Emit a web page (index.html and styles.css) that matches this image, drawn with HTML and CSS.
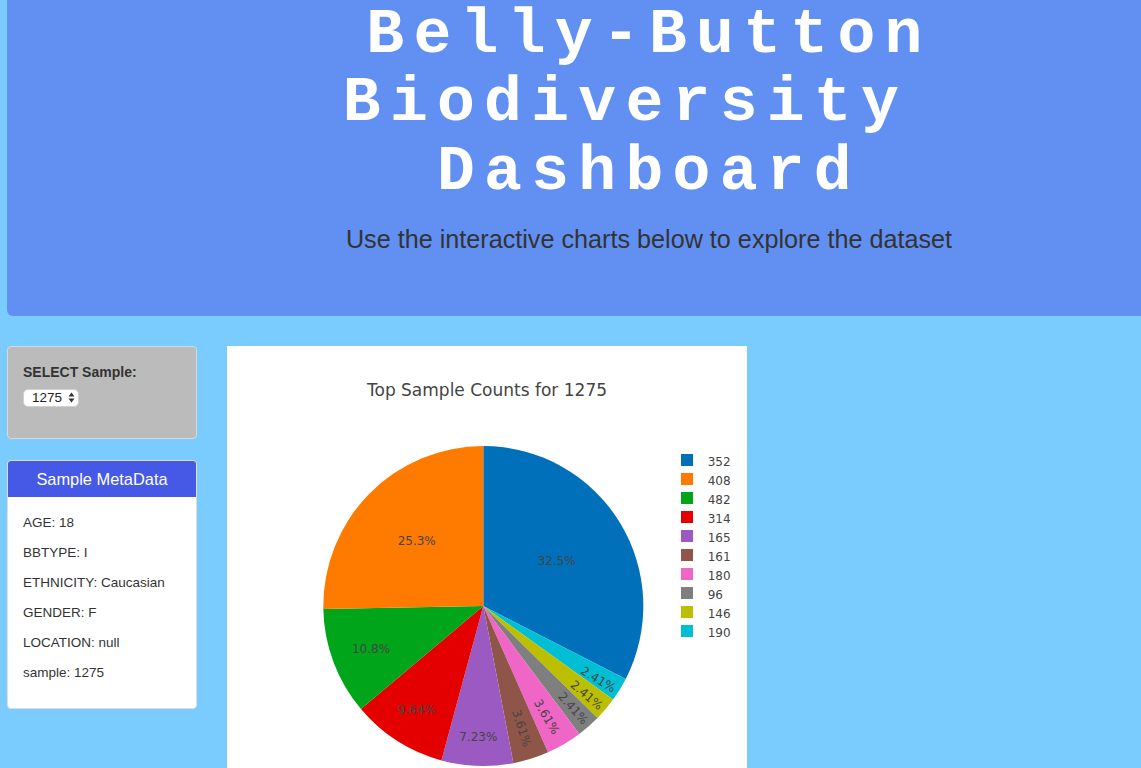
FILE: index.html
```
<!DOCTYPE html>
<html lang="en">
<head>
<meta charset="utf-8">
<title>Belly-Button Biodiversity Dashboard</title>
<link rel="stylesheet" href="styles.css">
</head>
<body>
<div class="page">
  <header class="hero">
    <h1 class="hero-title">Belly-Button<br>Biodiversity&nbsp;<br>Dashboard</h1>
    <p class="hero-sub">Use the interactive charts below to explore the dataset</p>
  </header>

  <main class="main">
    <aside class="sidebar">
      <div class="well">
        <label class="well-label" for="selDataset">SELECT Sample:</label>
        <div class="select-wrap">
          <select id="selDataset" class="select">
            <option>1275</option>
          </select>
          <svg class="select-arrows" width="7" height="11" viewBox="0 0 7 11" aria-hidden="true">
            <path d="M3.5 0.5 L6.5 4.5 L0.5 4.5 Z" fill="#333"/>
            <path d="M3.5 10.5 L6.5 6.5 L0.5 6.5 Z" fill="#333"/>
          </svg>
        </div>
      </div>

      <div class="meta">
        <div class="meta-head">Sample MetaData</div>
        <div class="meta-body">
          <p class="meta-item">AGE: 18</p>
          <p class="meta-item">BBTYPE: I</p>
          <p class="meta-item">ETHNICITY: Caucasian</p>
          <p class="meta-item">GENDER: F</p>
          <p class="meta-item">LOCATION: null</p>
          <p class="meta-item">sample: 1275</p>
        </div>
      </div>
    </aside>

    <section class="chart">
      <svg class="chart-svg" width="520" height="422" viewBox="0 0 520 422">
        <text class="chart-title" x="260" y="50" text-anchor="middle">Top Sample Counts for 1275</text>

        <g class="pie">
          <path d="M256.3,260 L256.3,100 A160,160 0 0 1 398.73,332.91 Z" fill="#0070bb"/>
          <path d="M256.3,260 L398.73,332.91 A160,160 0 0 1 386.09,353.55 Z" fill="#00bfd4"/>
          <path d="M256.3,260 L386.09,353.55 A160,160 0 0 1 370.51,372.06 Z" fill="#bbbf00"/>
          <path d="M256.3,260 L370.51,372.06 A160,160 0 0 1 352.3,388 Z" fill="#7f7f7f"/>
          <path d="M256.3,260 L352.3,388 A160,160 0 0 1 321.0,406.32 Z" fill="#f066c6"/>
          <path d="M256.3,260 L321.0,406.32 A160,160 0 0 1 286.4,417.14 Z" fill="#8f5549"/>
          <path d="M256.3,260 L286.4,417.14 A160,160 0 0 1 214.4,414.42 Z" fill="#9b5ac2"/>
          <path d="M256.3,260 L214.4,414.42 A160,160 0 0 1 133.95,363.10 Z" fill="#e50000"/>
          <path d="M256.3,260 L133.95,363.10 A160,160 0 0 1 96.33,263.03 Z" fill="#00a51a"/>
          <path d="M256.3,260 L96.33,263.03 A160,160 0 0 1 256.3,100 Z" fill="#ff7b00"/>
        </g>

        <g class="pct">
          <text x="329.7" y="215" dy="0.35em" text-anchor="middle">32.5%</text>
          <text x="189.7" y="195" dy="0.35em" text-anchor="middle">25.3%</text>
          <text x="144" y="302.7" dy="0.35em" text-anchor="middle">10.8%</text>
          <text x="189.7" y="363.3" dy="0.35em" text-anchor="middle">9.64%</text>
          <text x="251.3" y="390.7" dy="0.35em" text-anchor="middle">7.23%</text>
          <text x="371.3" y="333.3" dy="0.35em" text-anchor="middle" transform="rotate(31.4 371.3 333.3)">2.41%</text>
          <text x="359.7" y="349" dy="0.35em" text-anchor="middle" transform="rotate(40.1 359.7 349)">2.41%</text>
          <text x="346.3" y="362.3" dy="0.35em" text-anchor="middle" transform="rotate(48.8 346.3 362.3)">2.41%</text>
          <text x="319.7" y="370.7" dy="0.35em" text-anchor="middle" transform="rotate(59.6 319.7 370.7)">3.61%</text>
          <text x="294.7" y="382.3" dy="0.35em" text-anchor="middle" transform="rotate(72.6 294.7 382.3)">3.61%</text>
        </g>

        <g class="legend">
          <rect x="454" y="108" width="12" height="12" fill="#0070bb"/>
          <text x="480.7" y="119.5">352</text>
          <rect x="454" y="127" width="12" height="12" fill="#ff7b00"/>
          <text x="480.7" y="138.5">408</text>
          <rect x="454" y="146" width="12" height="12" fill="#00a51a"/>
          <text x="480.7" y="157.5">482</text>
          <rect x="454" y="165" width="12" height="12" fill="#e50000"/>
          <text x="480.7" y="176.5">314</text>
          <rect x="454" y="184" width="12" height="12" fill="#9b5ac2"/>
          <text x="480.7" y="195.5">165</text>
          <rect x="454" y="203" width="12" height="12" fill="#8f5549"/>
          <text x="480.7" y="214.5">161</text>
          <rect x="454" y="222" width="12" height="12" fill="#f066c6"/>
          <text x="480.7" y="233.5">180</text>
          <rect x="454" y="241" width="12" height="12" fill="#7f7f7f"/>
          <text x="480.7" y="252.5">96</text>
          <rect x="454" y="260" width="12" height="12" fill="#bbbf00"/>
          <text x="480.7" y="271.5">146</text>
          <rect x="454" y="279" width="12" height="12" fill="#00bfd4"/>
          <text x="480.7" y="290.5">190</text>
        </g>
      </svg>
    </section>
  </main>
</div>
</body>
</html>
```
FILE: styles.css
```
* {
  box-sizing: border-box;
}

html,
body {
  margin: 0;
  padding: 0;
}

body {
  background: #7acbfe;
  font-family: "Liberation Sans", Arial, Helvetica, sans-serif;
  color: #333;
  font-size: 14px;
}

.page {
  padding-left: 7px;
}

.hero {
  height: 316px;
  background: #6190f2;
  border-radius: 0 0 0 6px;
  padding-left: 150px;
  padding-top: 2px;
  text-align: center;
}

.hero-title {
  margin: 0;
  font-family: "Liberation Mono", "Courier New", monospace;
  font-weight: bold;
  font-size: 63px;
  line-height: 68.4px;
  letter-spacing: 9.3px;
  color: #fff;
}

.hero-sub {
  margin: 17px 0 0;
  font-size: 25.2px;
  line-height: 30px;
  color: #333;
}

.main {
  display: flex;
  align-items: flex-start;
  gap: 30px;
  margin-top: 30px;
}

.sidebar {
  width: 190px;
  display: flex;
  flex-direction: column;
  gap: 21px;
}

.well {
  height: 93px;
  background: #bbbbbb;
  border: 1px solid #d9d9d9;
  border-radius: 4px;
  padding: 15px 15px 0;
}

.well-label {
  display: block;
  font-weight: bold;
  font-size: 14px;
  line-height: 20px;
  margin-bottom: 7px;
}

.select-wrap {
  position: relative;
  width: 56px;
  height: 18px;
}

.select {
  appearance: none;
  -webkit-appearance: none;
  display: block;
  width: 56px;
  height: 18px;
  margin: 0;
  padding: 0 0 0 8px;
  border: 1px solid #d0d0d0;
  border-radius: 5px;
  background: #fff;
  font-family: "Liberation Sans", Arial, sans-serif;
  font-size: 13.5px;
  line-height: 16px;
  color: #222;
}

.select-arrows {
  position: absolute;
  left: 45px;
  top: 3px;
  pointer-events: none;
}

.meta {
  background: #fff;
  border: 1px solid #dddddd;
  border-radius: 4px;
  overflow: hidden;
}

.meta-head {
  height: 36px;
  line-height: 36px;
  background: #4559e6;
  color: #fff;
  text-align: center;
  font-size: 16.4px;
}

.meta-body {
  padding: 16px 15px 15px;
}

.meta-item {
  margin: 0 0 10px;
  font-size: 13.5px;
  line-height: 20px;
  color: #333;
}

.chart {
  width: 520px;
  height: 422px;
  background: #fff;
}

.chart-svg {
  display: block;
}

.chart-title {
  font-family: "DejaVu Sans", Verdana, sans-serif;
  font-size: 17px;
  fill: #444;
}

.pct text {
  font-family: "DejaVu Sans", Verdana, sans-serif;
  font-size: 12px;
  fill: #444;
}

.legend text {
  font-family: "DejaVu Sans", Verdana, sans-serif;
  font-size: 12px;
  fill: #444;
}
```
